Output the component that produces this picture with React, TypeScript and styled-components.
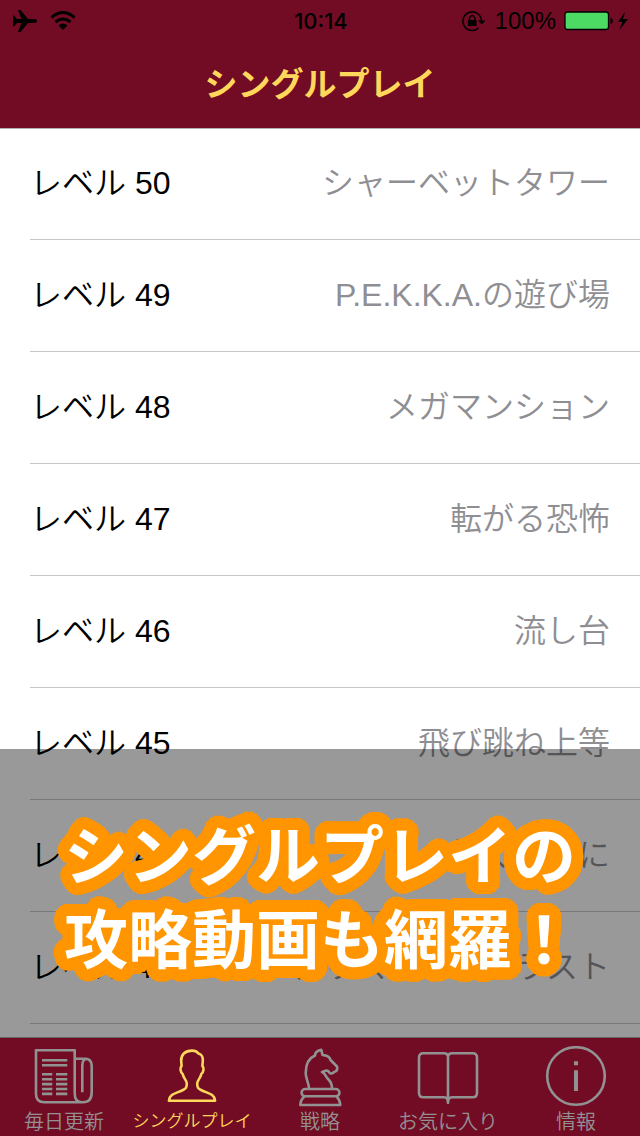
import React from 'react';
import styled, { createGlobalStyle } from 'styled-components';

const GlobalStyle = createGlobalStyle`
  * { box-sizing: border-box; }
  body {
    margin: 0;
    background: #fff;
    font-family: "Liberation Sans", "Noto Sans CJK JP", sans-serif;
  }
  h1, p, ul { margin: 0; padding: 0; }
`;

const Screen = styled.div`
  position: relative;
  display: flex;
  flex-direction: column;
  height: 100vh;
  overflow: hidden;
`;

const Header = styled.header`
  flex: none;
  background: #720c24;
  box-shadow: 0 1px 0 #b2b2b2;
`;

const StatusBar = styled.div`
  display: grid;
  grid-template-columns: 1fr auto 1fr;
  align-items: center;
  height: 42px;
  padding: 0 10px 0 12px;
  font-size: 24px;
  line-height: 42px;
`;

const StatusGroup = styled.div<{ $end?: boolean }>`
  display: flex;
  align-items: center;
  justify-content: ${({ $end }) => ($end ? 'flex-end' : 'flex-start')};
  gap: ${({ $end }) => ($end ? '8px' : '12px')};
`;

const Clock = styled.time`
  font-family: "Inter", sans-serif;
  font-size: 22px;
  font-weight: 500;
`;

const Title = styled.h1`
  height: 86px;
  color: #ffd75a;
  font-size: 33px;
  font-weight: 700;
  line-height: 86px;
  text-align: center;
`;

const List = styled.ul`
  flex: 1;
  min-height: 0;
  overflow: hidden;
  list-style: none;
`;

const Row = styled.li`
  display: flex;
  align-items: center;
  justify-content: space-between;
  height: 112px;
  margin-left: 30px;
  padding: 0 30px 2px 0;
  border-bottom: 1px solid #c8c7cc;
  font-size: 32px;
  font-weight: 350;
  line-height: 48px;
`;

const Level = styled.span`
  color: #000;
`;

const Stage = styled.span`
  color: #8e8e93;
`;

const Shade = styled.div`
  position: absolute;
  right: 0;
  bottom: 0;
  left: 0;
  height: 387px;
  padding: 60px 64px 0;
  background: rgba(0, 0, 0, 0.4);
  pointer-events: none;
`;

const ring = (radius: number, steps: number) =>
  Array.from({ length: steps }, (_, i) => {
    const angle = (i / steps) * Math.PI * 2;
    const x = (Math.cos(angle) * radius).toFixed(2);
    const y = (Math.sin(angle) * radius).toFixed(2);
    return `${x}px ${y}px 0 #ff9500`;
  });

const roundOutline = [...ring(12, 48), ...ring(8, 24), ...ring(4, 12)].join(', ');

const Caption = styled.p`
  color: #fff;
  font-family: "Noto Sans CJK JP", sans-serif;
  font-size: 64px;
  font-weight: 700;
  line-height: 84px;
  white-space: nowrap;
  text-shadow: ${roundOutline};
`;

const TabBar = styled.nav`
  position: relative;
  display: grid;
  flex: none;
  grid-template-columns: repeat(5, minmax(0, 1fr));
  height: 99px;
  background: #720c24;
  border-top: 1px solid #666;
`;

const Tab = styled.button<{ $active?: boolean }>`
  display: flex;
  flex-direction: column;
  align-items: center;
  padding: 8px 0 0;
  border: 0;
  background: none;
  color: ${({ $active }) => ($active ? '#ffd75a' : '#929292')};
  font-family: inherit;
  font-size: 20px;
  font-weight: 350;
  line-height: 28px;
  white-space: nowrap;
`;

const TabLabel = styled.span<{ $small?: boolean }>`
  font-size: ${({ $small }) => ($small ? '17px' : '20px')};
`;

const TabIcon = styled.svg`
  flex: none;
  width: 64px;
  height: 62px;
  fill: none;
  stroke: currentColor;
  stroke-width: 2.6;
  stroke-linejoin: round;
`;

const levels = [
  [50, 'シャーベットタワー'],
  [49, 'P.E.K.K.A.の遊び場'],
  [48, 'メガマンション'],
  [47, '転がる恐怖'],
  [46, '流し台'],
  [45, '飛び跳ね上等'],
  [44, '氷の如く冷静に'],
  [43, 'クリスタル・クラスト'],
] as const;

const tabs = [
  {
    label: '毎日更新',
    icon: (
      <>
        <path d="M42.7 47V4.3H4V48q0 8.3 8.3 8.3H51q8.7 0 8.7-10V19.7q0-7-7-7h-10M42.7 47q0 9.3 7.3 9.3M50.3 46.3V19.7q0-7 5-6.7" />
        <path d="M10 14.2h25.3M10 19.2h25.3M10 28.3h10.3M24 28.3h11.3M10 33.2h10.3M24 33.2h11.3M10 38.1h10.3M24 38.1h11.3M10 43h10.3M24 43h11.3M10 47.9h10.3M24 47.9h11.3" />
      </>
    ),
  },
  {
    label: 'シングルプレイ',
    small: true,
    icon: (
      <path d="M32 4.6C25 4.6 20.8 9 21.2 15L21.6 20C19.7 21.5 20.4 26.5 22.7 28C23.6 33 26.8 34 26.8 37.5C26.8 41.5 26 42.5 23 44C16.5 47.3 9.5 47.5 8.9 54.8H55.1C54.5 47.5 47.5 47.3 41 44C38 42.5 37.2 41.5 37.2 37.5C37.2 34 40.4 33 41.3 28C43.6 26.5 44.3 21.5 42.4 20L42.8 15C43.2 10 41.5 8.5 38.5 7.5C37 5.5 34.5 4.6 32 4.6Z" />
    ),
  },
  {
    label: '戦略',
    icon: (
      <>
        <path d="M21 42.5C21 37 17.7 33 17.7 27C17.7 18 21 12 27 9.5Q27 5 33.3 3.7L34.5 9Q41.5 9.5 42.5 14L49 20.5Q50 24 47.5 25.5C46 25 45.5 28 42.5 27.5C40.5 27 41.5 24.5 38.5 24.5L34 26C37.5 27 37.5 31 40.5 33.5C43.5 36.5 44 39 44 42.5" />
        <rect x="13.6" y="43" width="37.8" height="7.3" rx="3.6" />
        <path d="M16.5 50.3Q12.5 54 12.3 59H52.3Q52 54 48.5 50.3" />
      </>
    ),
  },
  {
    label: 'お気に入り',
    icon: (
      <path d="M32 10.5Q31.5 7.3 28 7.3H7.3Q3 7.3 3 11.5V47Q3 51.3 7.3 51.3H28Q32 51.3 32 57Q32 51.3 36 51.3H56.7Q61 51.3 61 47V11.5Q61 7.3 56.7 7.3H36Q32.5 7.3 32 10.5V56" />
    ),
  },
  {
    label: '情報',
    icon: (
      <>
        <circle cx="32" cy="30" r="28.8" />
        <path strokeWidth="4" d="M32 15.3v4M32 24.3v20.7" />
      </>
    ),
  },
];

export default function App() {
  return (
    <Screen>
      <GlobalStyle />
      <Header>
        <StatusBar>
          <StatusGroup>
            <svg width="26" height="24" viewBox="0 0 26 24" aria-label="機内モード">
              <path d="M24 10.2q2 1.8 0 3.6L16 14l-7.5 9H6l3.5-9H5l-3 3.500H1v-11h1L5 10h4.500L6 1h2.500L16 10Z" />
            </svg>
            <svg width="26" height="20" viewBox="0 0 26 20" aria-label="Wi-Fi">
              <path d="M1.5 6.5Q13-3.500 24.500 6.500M5.500 11q7.500-6 15 0" fill="none" stroke="#000" strokeWidth="3" />
              <path d="M13 19l-4.500-4.500q4.500-4 9 0Z" />
            </svg>
          </StatusGroup>
          <Clock>10:14</Clock>
          <StatusGroup $end>
            <svg width="26" height="22" viewBox="0 0 26 22" aria-label="画面回転ロック">
              <path d="M17.5 18A9.3 9.3 0 1 1 20.5 11" fill="none" stroke="#000" strokeWidth="1.5" />
              <path d="M17 10.5h7.5l-3.7 4ZM7 10h8.5v6H7Z" />
              <path d="M8.5 11V8q2.7-5 5.4 0v3" fill="none" stroke="#000" strokeWidth="1.5" />
            </svg>
            <span>100%</span>
            <svg width="66" height="20" viewBox="0 0 66 20" aria-label="充電中">
              <rect x="1" y="1" width="43.5" height="17.5" rx="2.5" fill="#4cd964" stroke="#000" strokeWidth="1.3" />
              <path d="M46.5 6.5q2.5 1 2.5 3.3t-2.5 3.3ZM61 1l-7 10h4.5l-3 8 8.5-11h-5Z" />
            </svg>
          </StatusGroup>
        </StatusBar>
        <Title>シングルプレイ</Title>
      </Header>
      <List>
        {levels.map(([level, stage]) => (
          <Row key={level}>
            <Level>レベル {level}</Level>
            <Stage>{stage}</Stage>
          </Row>
        ))}
      </List>
      <Shade>
        <Caption>
          シングルプレイの
          <br />
          攻略動画も網羅！
        </Caption>
      </Shade>
      <TabBar>
        {tabs.map(({ label, icon, small }, index) => (
          <Tab key={label} type="button" $active={index === 1}>
            <TabIcon viewBox="0 0 64 62" aria-hidden="true">{icon}</TabIcon>
            <TabLabel $small={small}>{label}</TabLabel>
          </Tab>
        ))}
      </TabBar>
    </Screen>
  );
}
